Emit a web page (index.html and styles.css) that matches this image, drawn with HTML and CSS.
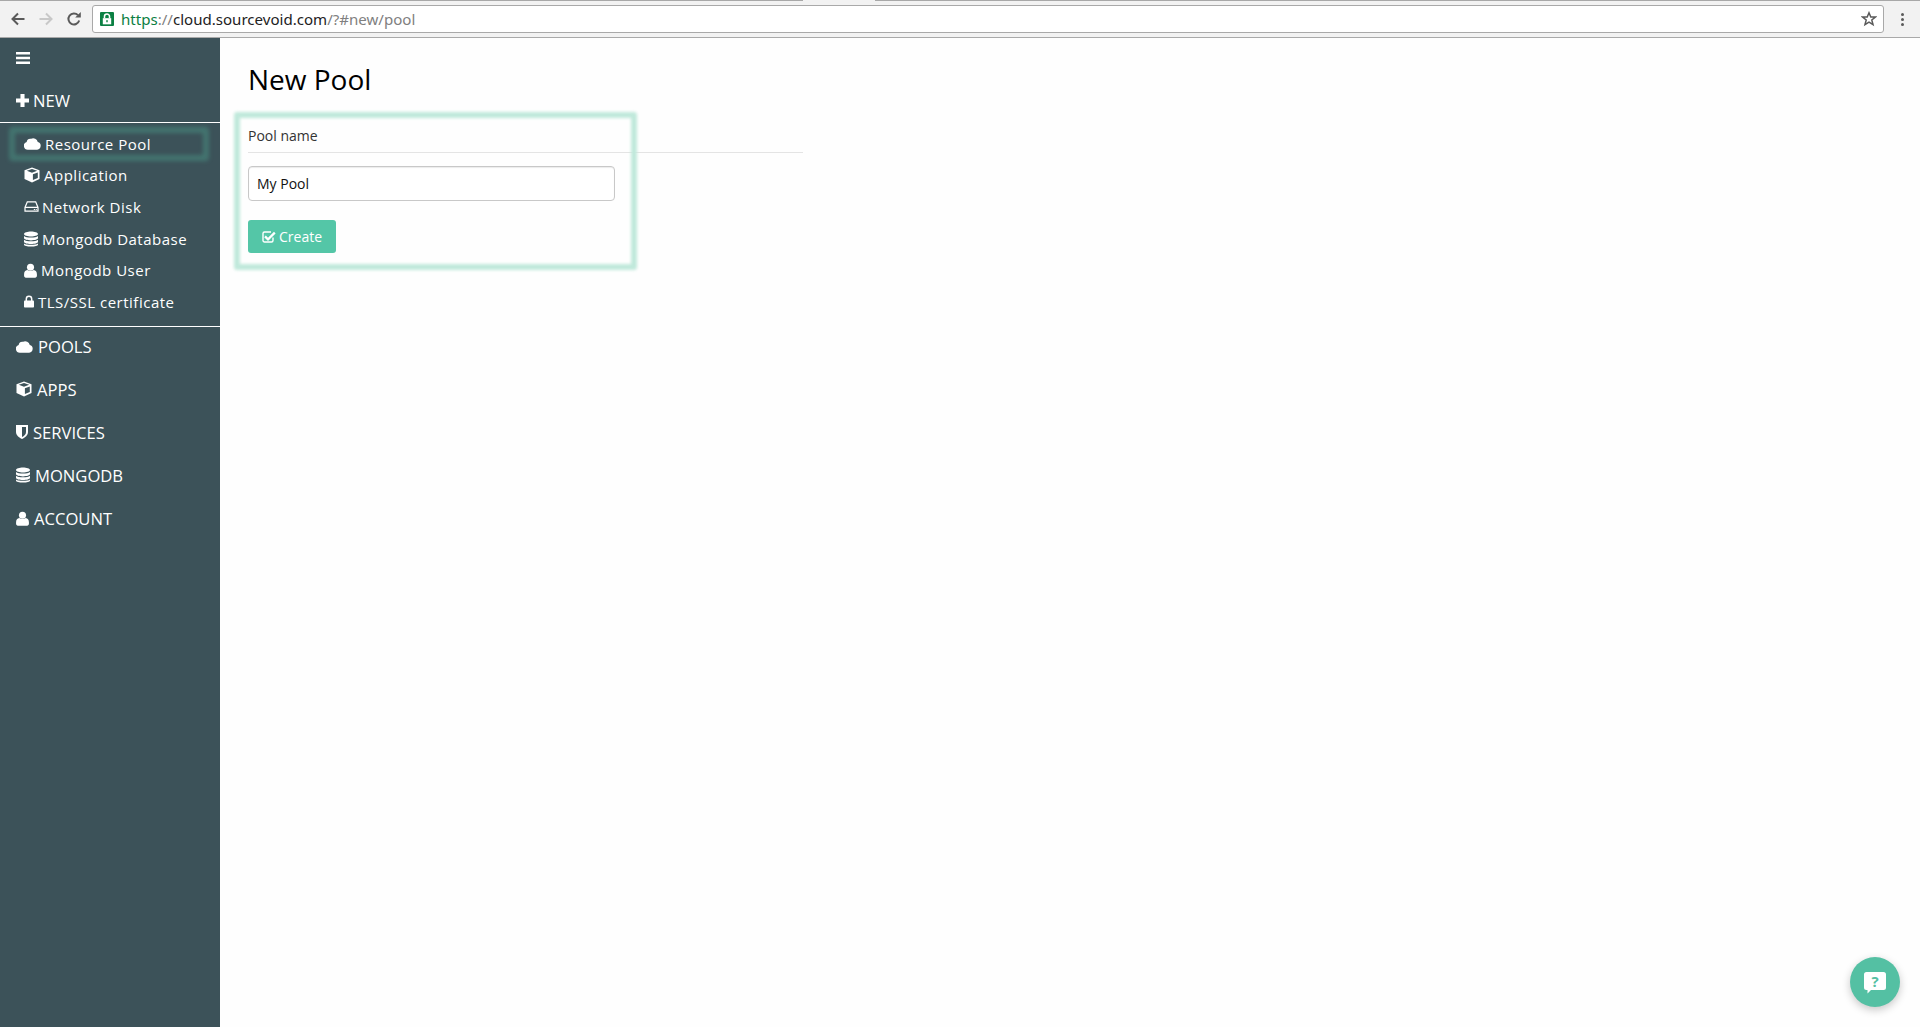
FILE: index.html
```html
<!DOCTYPE html>
<html>
<head>
    <meta charset="UTF-8">
    <title>New Pool</title>
    <link rel="stylesheet" href="styles.css">
</head>
<body>
    <!-- Browser toolbar -->
    <div class="tabline"><span class="tabline-gap"></span></div>
    <div class="toolbar">
        <svg class="nav-icon back" viewBox="0 0 16 16"><path d="M14.5 8H3M8 2.5 2.5 8 8 13.5" fill="none" stroke="#5a5a5a" stroke-width="2"/></svg>
        <svg class="nav-icon forward" viewBox="0 0 16 16"><path d="M1.5 8H13M8 2.5 13.5 8 8 13.5" fill="none" stroke="#c8c8c8" stroke-width="2"/></svg>
        <svg class="nav-icon reload" viewBox="0 0 16 16"><path d="M13.2 9.5A5.5 5.5 0 1 1 12 4.2" fill="none" stroke="#5a5a5a" stroke-width="2"/><path d="M9.2 6.6h5.6V1z" fill="#5a5a5a"/></svg>
        <div class="urlbar">
            <span class="lock-badge">
                <svg viewBox="0 0 10 10"><path d="M3.2 4.5V3.2a1.8 1.8 0 0 1 3.6 0v1.3" fill="none" stroke="#fff" stroke-width="1.1"/><rect x="2" y="4.4" width="6" height="4.4" fill="#fff"/><rect x="4.5" y="5.8" width="1" height="1.5" fill="#0b8043"/></svg>
            </span>
            <span class="url"><span class="url-scheme">https</span><span class="url-dim">://</span>cloud.sourcevoid.com<span class="url-dim">/?#new/pool</span></span>
            <svg class="star" viewBox="0 0 16 16"><path d="M8 1.8 9.8 6h4.6l-3.6 3 1.2 4.6L8 11.1l-4 2.5L5.2 9 1.6 6h4.6z" fill="none" stroke="#5a5a5a" stroke-width="1.5"/></svg>
        </div>
        <div class="dots"><i></i><i></i><i></i></div>
    </div>

    <div class="app">
        <!-- Sidebar -->
        <div class="sidebar">
            <div class="burger"><svg viewBox="0 0 14 12"><path d="M0 0h14v2.4H0zM0 4.8h14v2.4H0zM0 9.6h14V12H0z" fill="#fff"/></svg></div>
            <div class="main-link new-link">
                <svg class="icon" viewBox="0 0 14 14"><path d="M4.8 0h4.400v4.800H14v4.400H9.200V14H4.800V9.200H0V4.800h4.800z" fill="#fff"/></svg>NEW
            </div>
            <div class="submenu">
                <div class="sub-link active">
                    <svg class="icon cloud" viewBox="0 1 18 13"><path d="M4.200 14A4.200 4.200 0 0 1 2.800 5.800 4.200 4.200 0 0 1 7.500 2.500 5 5 0 0 1 14.600 5.800 4.200 4.200 0 0 1 14 14z" fill="#fff"/></svg><span class="gap-a">Resource Pool</span>
                </div>
                <div class="sub-link">
                    <svg class="icon cube" viewBox="0 0 16 16"><path d="M8 .5 15.500 3.200V12L8 15.500 .5 12V3.200z" fill="#fff"/><path d="M2.800 3.800 8 5.700l5.200-1.900L8 2zM8.900 7.300V13l4.900-2.100V5.500z" fill="#3c5259"/></svg><span class="gap-b">Application</span>
                </div>
                <div class="sub-link">
                    <svg class="icon disk" viewBox="0 0 16 14"><path d="M3.500 2h9L15 8v4H1V8zM1.500 8h13" fill="none" stroke="#fff" stroke-width="1.300"/><path d="M10.500 9.800h1.200v1h-1.200zM12.500 9.800h1.200v1h-1.200z" fill="#fff"/></svg><span class="gap-c">Network Disk</span>
                </div>
                <div class="sub-link">
                    <svg class="icon db" viewBox="0 0 14 16"><path d="M7 .5c3.600 0 7 1 7 2.500S10.600 5.500 7 5.500 0 4.500 0 3 3.400.5 7 .5zM0 5c1.200 1 4 1.500 7 1.500S12.800 6 14 5v2.100c0 1.300-3.200 2.300-7 2.300s-7-1-7-2.300zM0 8.700c1.200 1 4 1.500 7 1.500s5.800-.5 7-1.500v2.100c0 1.300-3.200 2.300-7 2.300s-7-1-7-2.300zM0 12.400c1.200 1 4 1.400 7 1.400s5.800-.4 7-1.400v1c0 1.300-3.200 2.100-7 2.100s-7-.8-7-2.100z" fill="#fff"/></svg><span class="gap-d">Mongodb Database</span>
                </div>
                <div class="sub-link">
                    <svg class="icon user" viewBox="0 0 12 14"><circle cx="6" cy="4" r="3.300" fill="#fff"/><path d="M3 6.500c1.600 1.400 4.400 1.400 6 0 1.800.3 3 1.700 3 4V12c0 1-.7 1.800-1.700 1.800H1.700C.7 13.800 0 13 0 12v-1.500c0-2.300 1.200-3.700 3-4z" fill="#fff"/></svg><span class="gap-d">Mongodb User</span>
                </div>
                <div class="sub-link">
                    <svg class="icon lock" viewBox="0 0 10 13"><path d="M2.300 6V4a2.700 2.700 0 0 1 5.400 0v2" fill="none" stroke="#fff" stroke-width="1.500"/><rect x="0" y="5.600" width="10" height="7" rx=".8" fill="#fff"/></svg><span class="gap-e">TLS/SSL certificate</span>
                </div>
            </div>
            <div class="main-link">
                <svg class="icon cloud" viewBox="0 1 18 13"><path d="M4.200 14A4.200 4.200 0 0 1 2.800 5.800 4.200 4.200 0 0 1 7.500 2.500 5 5 0 0 1 14.600 5.800 4.200 4.200 0 0 1 14 14z" fill="#fff"/></svg><span class="gap-f">POOLS</span>
            </div>
            <div class="main-link">
                <svg class="icon cube" viewBox="0 0 16 16"><path d="M8 .5 15.500 3.200V12L8 15.500 .5 12V3.200z" fill="#fff"/><path d="M2.800 3.800 8 5.700l5.200-1.900L8 2zM8.900 7.300V13l4.900-2.100V5.500z" fill="#3c5259"/></svg><span class="gap-g">APPS</span>
            </div>
            <div class="main-link">
                <svg class="icon shield" viewBox="0 0 12 14"><path d="M0 0h12v7c0 3.500-3 5.500-6 7-3-1.500-6-3.500-6-7z" fill="#fff"/><path d="M6 2v10c2-1 4-2.600 4-5V2z" fill="#3c5259"/></svg><span class="gap-g">SERVICES</span>
            </div>
            <div class="main-link">
                <svg class="icon db" viewBox="0 0 14 16"><path d="M7 .5c3.600 0 7 1 7 2.500S10.600 5.500 7 5.500 0 4.500 0 3 3.400.5 7 .5zM0 5c1.200 1 4 1.500 7 1.500S12.800 6 14 5v2.100c0 1.300-3.200 2.300-7 2.300s-7-1-7-2.300zM0 8.700c1.200 1 4 1.500 7 1.500s5.800-.5 7-1.500v2.100c0 1.300-3.200 2.300-7 2.300s-7-1-7-2.300zM0 12.400c1.200 1 4 1.400 7 1.400s5.800-.4 7-1.400v1c0 1.300-3.200 2.100-7 2.100s-7-.8-7-2.100z" fill="#fff"/></svg><span class="gap-g">MONGODB</span>
            </div>
            <div class="main-link">
                <svg class="icon user" viewBox="0 0 12 14"><circle cx="6" cy="4" r="3.300" fill="#fff"/><path d="M3 6.500c1.600 1.400 4.400 1.400 6 0 1.800.3 3 1.700 3 4V12c0 1-.7 1.800-1.700 1.800H1.700C.7 13.800 0 13 0 12v-1.500c0-2.300 1.200-3.700 3-4z" fill="#fff"/></svg><span class="gap-g">ACCOUNT</span>
            </div>
        </div>

        <!-- Page content -->
        <div class="content">
            <h1>New Pool</h1>
            <div class="pool-form">
                <div class="form-label">Pool name</div>
                <input class="pool-input" type="text" value="My Pool">
                <button class="create-button">
                    <svg viewBox="0 0 14 13"><path d="M11 7.500V10.500a1.500 1.500 0 0 1-1.500 1.500h-7A1.500 1.500 0 0 1 1 10.500v-7A1.500 1.500 0 0 1 2.500 2H9" fill="none" stroke="#fff" stroke-width="1.400"/><path d="M3.800 5.600 6 7.800l6-6 1.600 1.600L6 11 2.200 7.200z" fill="#fff"/></svg>Create
                </button>
            </div>
        </div>
    </div>

    <!-- Help bubble -->
    <div class="help">
        <svg viewBox="0 0 24 24"><path d="M3.500 2h17A2.500 2.500 0 0 1 23 4.500v13a2.500 2.500 0 0 1-2.500 2.500H8l-3.500 3.500V20h-1A2.500 2.500 0 0 1 1 17.500v-13A2.500 2.500 0 0 1 3.500 2z" fill="#fff"/><text x="12" y="16.500" text-anchor="middle" class="help-mark">?</text></svg>
    </div>
</body>
</html>
```

FILE: styles.css
```css
* {
    box-sizing: border-box;
}

html, body {
    height: 100%;
}

body {
    margin: 0;
    display: flex;
    flex-direction: column;
    overflow: hidden;
    font-family: "Open Sans", sans-serif;
    background-color: #fefefe;
}

/* Browser toolbar */
.tabline {
    height: 2px;
    flex: none;
    padding-left: 803px;
    background-color: #a8a8a8;
    border-bottom: 1px solid #f2f2f2;
    display: flex;
}

.tabline-gap {
    width: 72px;
    background-color: #f2f2f2;
}

.toolbar {
    height: 36px;
    flex: none;
    display: flex;
    align-items: center;
    padding: 0 8px 1px 10px;
    background-color: #f2f2f2;
    border-bottom: 1px solid #a9a9a9;
}

.nav-icon {
    width: 16px;
    height: 16px;
    flex: none;
}

.forward {
    margin-left: 12px;
}

.reload {
    margin-left: 12px;
}

.urlbar {
    width: 1792px;
    height: 28px;
    margin-left: 10px;
    display: flex;
    align-items: center;
    background-color: #fff;
    border: 1px solid #a9a9a9;
    border-radius: 3px;
    padding: 0 6px 0 7px;
}

.lock-badge {
    width: 14px;
    height: 14px;
    flex: none;
    background-color: #0b8043;
    border-radius: 1px;
    display: flex;
}

.url {
    margin-left: 7px;
    flex: 1;
    font-family: "Noto Sans", sans-serif;
    font-size: 15.07px;
    color: #222;
    white-space: nowrap;
}

.url-scheme {
    color: #0b8043;
}

.url-dim {
    color: #808080;
}

.star {
    width: 16px;
    height: 16px;
    flex: none;
}

.dots {
    margin-left: 17px;
    display: flex;
    flex-direction: column;
    gap: 2px;
}

.dots i {
    width: 3px;
    height: 3px;
    background-color: #5a5a5a;
    border-radius: 50%;
}

/* Sidebar */
.app {
    flex: 1;
    display: flex;
    min-height: 0;
}

.sidebar {
    width: 220px;
    flex: none;
    background-color: #3c5259;
    color: #fff;
}

.burger {
    height: 35px;
    padding: 14px 0 0 16px;
}

.burger svg {
    width: 14px;
    height: 12px;
    display: block;
}

.main-link {
    height: 43px;
    display: flex;
    align-items: center;
    padding: 0 0 5px 16px;
    font-size: 16.6px;
}

.new-link {
    height: 50px;
    padding: 6px 0 0 16px;
    border-bottom: 1px solid #fff;
}

.submenu {
    height: 204px;
    padding-top: 5px;
    border-bottom: 1px solid #fff;
}

.sub-link {
    height: 31.600px;
    display: flex;
    align-items: center;
    padding-left: 24px;
    font-size: 15px;
    letter-spacing: .5px;
    position: relative;
}

/* Blurred glow around the selected entry */
.active::before {
    content: "";
    position: absolute;
    left: 9px;
    right: 11px;
    top: -1px;
    bottom: -1px;
    border: 6px solid rgba(84, 198, 167, .3);
    border-radius: 4px;
    filter: blur(2px);
}

.icon {
    flex: none;
}

.cloud {
    width: 17px;
    height: 13px;
}

.cube {
    width: 16px;
    height: 16px;
}

.disk {
    width: 15px;
    height: 13px;
}

.db {
    width: 14px;
    height: 16px;
}

.user {
    width: 13px;
    height: 15px;
}

.lock {
    width: 10px;
    height: 13px;
}

.shield {
    width: 12px;
    height: 14px;
}

.new-link .icon {
    width: 13px;
    height: 13px;
    margin-right: 4px;
}

.gap-a {
    margin-left: 4px;
}

.gap-b {
    margin-left: 4px;
}

.gap-c {
    margin-left: 3px;
}

.gap-d {
    margin-left: 4px;
}

.gap-e {
    margin-left: 4px;
}

.gap-f {
    margin-left: 5px;
}

.gap-g {
    margin-left: 5px;
}

/* Page content */
.content {
    flex: 1;
    padding: 22px 0 0 28px;
}

h1 {
    margin: 0;
    font-size: 28px;
    font-weight: 400;
    line-height: 38px;
    color: #000;
}

.pool-form {
    width: 555px;
    margin-top: 16px;
    position: relative;
}

/* Blurred frame drawn over the form */
.pool-form::before {
    content: "";
    box-sizing: border-box;
    position: absolute;
    left: -14px;
    top: -2px;
    width: 403px;
    height: 158px;
    border: 6px solid #c0e9db;
    border-radius: 3px;
    filter: blur(1.5px);
    pointer-events: none;
}

.form-label {
    height: 39px;
    padding-top: 12px;
    font-size: 14px;
    color: #333;
    border-bottom: 1px solid #e4e4e4;
}

.pool-input {
    display: block;
    width: 367px;
    height: 35px;
    margin-top: 13px;
    padding: 0 8px;
    font-family: "Open Sans", sans-serif;
    font-size: 14px;
    color: #111;
    background-color: #fff;
    border: 1px solid #c8c8c8;
    border-radius: 4px;
    box-shadow: inset 0 1px 1px rgba(0, 0, 0, .08);
}

.create-button {
    display: flex;
    align-items: center;
    height: 33px;
    margin-top: 19px;
    padding: 0 14px;
    font-family: "Open Sans", sans-serif;
    font-size: 14px;
    color: #fff;
    background-color: #54c6a7;
    border: none;
    border-radius: 3px;
}

.create-button svg {
    width: 14px;
    height: 13px;
    margin-right: 3px;
}

/* Help bubble */
.help {
    position: absolute;
    left: 1850px;
    top: 957px;
    width: 50px;
    height: 50px;
    border-radius: 50%;
    display: flex;
    align-items: center;
    justify-content: center;
    background-color: #54c0a3;
    box-shadow: 0 3px 8px rgba(0, 0, 0, .22);
}

.help svg {
    width: 24px;
    height: 24px;
}

.help-mark {
    font-family: "Open Sans", sans-serif;
    font-size: 15px;
    font-weight: 700;
    fill: #54c0a3;
}
```
